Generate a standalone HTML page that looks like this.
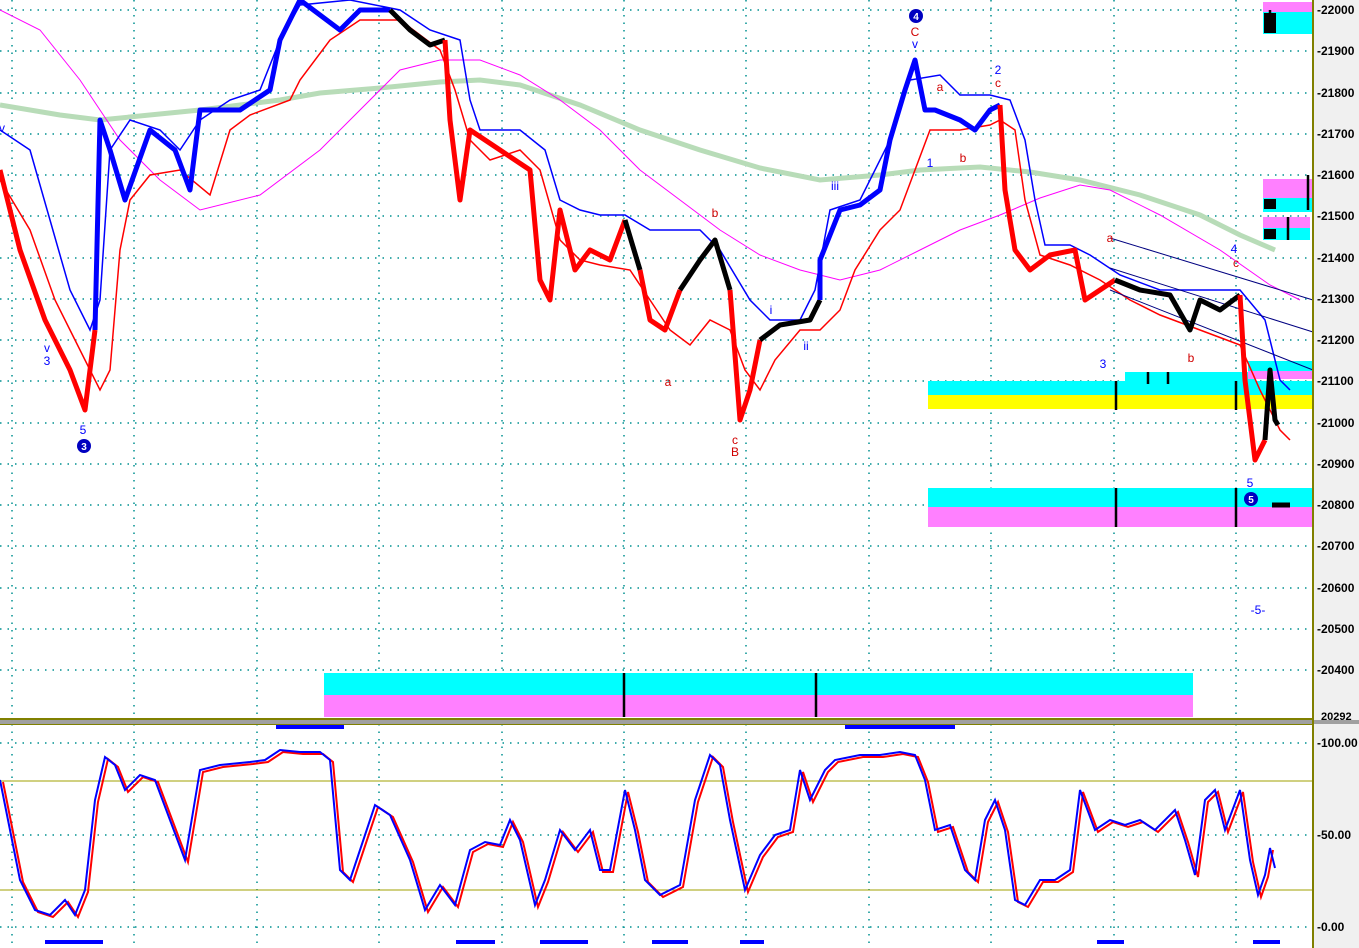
<!DOCTYPE html>
<html><head><meta charset="utf-8"><style>
html,body{margin:0;padding:0;background:#fff;}
svg{display:block;font-family:"Liberation Sans",sans-serif;}
</style></head><body>
<svg width="1359" height="948" viewBox="0 0 1359 948" xmlns="http://www.w3.org/2000/svg">
<rect width="1359" height="948" fill="#fff"/>
<rect x="1314" y="0" width="45" height="948" fill="#f0f0f0"/>
<g stroke="#009090" stroke-width="1.5" stroke-dasharray="1.5,6" fill="none">
<path d="M0 10H1312M0 51H1312M0 93H1312M0 134H1312M0 175H1312M0 216H1312M0 258H1312M0 299H1312M0 340H1312M0 381H1312M0 423H1312M0 464H1312M0 505H1312M0 546H1312M0 588H1312M0 629H1312M0 670H1312"/>
<path d="M12 0V718M134 0V718M257 0V718M379 0V718M502 0V718M624 0V718M746 0V718M869 0V718M991 0V718M1114 0V718M1236 0V718"/>
<path d="M0 743H1312M0 835H1312M0 927H1312"/>
<path d="M12 724V945M134 724V945M257 724V945M379 724V945M502 724V945M624 724V945M746 724V945M869 724V945M991 724V945M1114 724V945M1236 724V945"/>
</g>
<rect x="324" y="673" width="869" height="22" fill="#00ffff"/>
<rect x="324" y="695" width="869" height="22" fill="#ff80ff"/>
<rect x="928" y="381" width="385" height="14" fill="#00ffff"/>
<rect x="928" y="395" width="385" height="14" fill="#ffff00"/>
<rect x="1125" y="372" width="130" height="11" fill="#00ffff"/>
<rect x="1248" y="361" width="65" height="10" fill="#00ffff"/>
<rect x="1248" y="371" width="65" height="8" fill="#ff80ff"/>
<rect x="928" y="488" width="385" height="19" fill="#00ffff"/>
<rect x="928" y="507" width="385" height="20" fill="#ff80ff"/>
<rect x="1263" y="2" width="50" height="10" fill="#ff80ff"/>
<rect x="1263" y="12" width="50" height="22" fill="#00ffff"/>
<rect x="1263" y="179" width="50" height="19" fill="#ff80ff"/>
<rect x="1263" y="198" width="50" height="14" fill="#00ffff"/>
<rect x="1263" y="217" width="47" height="11" fill="#ff80ff"/>
<rect x="1263" y="228" width="47" height="12" fill="#00ffff"/>
<g stroke="#000" stroke-width="2.5">
<path d="M624 673V717M816 673V717M1116 381V410M1236 381V410M1116 488V527M1236 488V527M1148 372V384M1168 372V384M1308 175V210M1288 217V240M1270 10V32"/>
</g>
<rect x="1264" y="13" width="12" height="20" fill="#000"/>
<rect x="1264" y="199" width="12" height="10" fill="#000"/>
<rect x="1264" y="229" width="12" height="10" fill="#000"/>
<polyline fill="none" stroke="#b8dcb8" stroke-width="5" points="0,105 60,115 100,120 200,110 280,100 320,93 380,88 440,82 480,80 520,85 580,105 640,130 700,150 760,168 820,180 880,175 920,170 980,167 1030,172 1080,180 1140,195 1200,215 1240,235 1275,250"/>
<polyline fill="none" stroke="#ff00ff" stroke-width="1" points="0,10 40,30 80,80 120,140 160,180 200,210 260,195 320,150 360,110 400,70 440,60 480,60 520,75 560,100 600,130 640,170 680,200 720,230 760,255 800,270 840,280 880,270 920,250 960,230 1000,215 1040,198 1080,185 1110,190 1160,215 1220,250 1270,285 1300,300"/>
<polyline fill="none" stroke="#0000ff" stroke-width="1.5" points="0,130 30,150 50,220 70,290 90,330 100,300 110,150 130,120 160,130 180,150 200,120 230,100 260,90 280,40 300,5 350,0 400,10 430,30 460,40 470,100 480,130 520,130 545,150 560,200 580,210 600,215 625,215 650,230 700,230 720,250 750,300 770,320 800,320 815,290 830,210 860,200 890,140 910,80 940,75 960,95 990,95 1010,100 1025,140 1035,200 1045,245 1070,245 1090,255 1120,275 1160,290 1200,290 1240,290 1265,320 1280,380 1290,390"/>
<polyline fill="none" stroke="#ff0000" stroke-width="1.5" points="0,180 30,230 55,300 75,340 100,390 110,370 120,250 130,200 150,175 180,170 210,195 230,130 250,115 290,100 300,80 330,40 360,20 400,20 440,50 455,90 470,140 490,160 520,150 540,170 560,240 580,260 600,265 630,270 650,300 670,330 690,345 710,320 730,330 745,370 760,390 775,360 800,330 820,330 840,310 855,270 880,230 900,210 915,170 930,130 960,130 990,125 1000,120 1015,130 1025,200 1040,255 1070,265 1100,280 1130,300 1160,315 1200,330 1240,345 1260,390 1280,430 1290,440"/>
<path d="M1110 238L1313 300M1110 268L1313 332M1110 290L1313 370" stroke="#000080" stroke-width="1" fill="none"/>
<g fill="none" stroke-width="5" stroke-linejoin="round">
<polyline stroke="#ff0000" points="0,170 20,250 45,320 70,370 85,410 95,330"/>
<polyline stroke="#0000ff" points="95,330 100,120 110,150 125,200 150,130 175,150 190,190 200,110 240,110 270,90 280,40 300,0 340,30 360,10 390,10"/>
<polyline stroke="#000" points="390,10 410,30 430,45 445,40"/>
<polyline stroke="#ff0000" points="445,40 450,120 460,200 470,130 500,150 530,170 540,280 550,300 560,210 575,270 590,250 610,260 625,220"/>
<polyline stroke="#000" points="625,220 640,270"/>
<polyline stroke="#ff0000" points="640,270 650,320 665,330 680,290"/>
<polyline stroke="#000" points="680,290 700,260 715,240 730,290"/>
<polyline stroke="#ff0000" points="730,290 740,420 750,390 760,340"/>
<polyline stroke="#000" points="760,340 780,325 810,320 820,300"/>
<polyline stroke="#0000ff" points="820,300 820,260 840,210 860,205 880,190 890,140 905,90 915,60 925,110 935,110 960,120 975,130 990,110 1000,105"/>
<polyline stroke="#ff0000" points="1000,105 1005,190 1015,250 1030,270 1050,255 1075,250 1085,300 1100,290 1115,280"/>
<polyline stroke="#000" points="1115,280 1140,290 1170,295 1190,330 1200,300 1220,310 1240,295"/>
<polyline stroke="#ff0000" points="1240,295 1245,380 1255,460 1265,440"/>
<polyline stroke="#000" points="1265,440 1270,370 1275,420 1278,425"/>
</g>
<path d="M1272 505h18" stroke="#000" stroke-width="5"/>
<g font-size="12" text-anchor="middle">
<g fill="#0000ff"><text x="47" y="352">v</text><text x="47" y="365">3</text><text x="83" y="434">5</text><text x="2" y="132">v</text><text x="930" y="167">1</text><text x="998" y="74">2</text><text x="1103" y="368">3</text><text x="1234" y="253">4</text><text x="1250" y="487">5</text><text x="835" y="190">iii</text><text x="771" y="314">i</text><text x="806" y="350">ii</text><text x="915" y="48">v</text><text x="1258" y="614">-5-</text></g>
<g fill="#d00000"><text x="915" y="36">C</text><text x="940" y="91">a</text><text x="963" y="162">b</text><text x="998" y="87">c</text><text x="1110" y="242">a</text><text x="1191" y="362">b</text><text x="1236" y="267">c</text><text x="715" y="217">b</text><text x="668" y="386">a</text><text x="735" y="444">c</text><text x="735" y="456">B</text></g>
</g>
<g font-size="10" font-weight="bold" text-anchor="middle" fill="#fff">
<circle cx="84" cy="446" r="7" fill="#0000c0"/><text x="84" y="450">3</text>
<circle cx="916" cy="16" r="7" fill="#0000c0"/><text x="916" y="20">4</text>
<circle cx="1251" cy="499" r="7" fill="#0000c0"/><text x="1251" y="503">5</text>
</g>
<rect x="0" y="718" width="1314" height="2" fill="#808000"/>
<rect x="0" y="720" width="1359" height="4" fill="#a0a0a0"/>
<rect x="0" y="724" width="1314" height="1" fill="#808000"/>
<rect x="1312" y="0" width="2" height="948" fill="#808000"/>
<path d="M0 781H1312M0 890H1312" stroke="#a0a000" stroke-width="1"/>
<path d="M276 727h68M845 727h110M45 942h58M456 942h39M540 942h48M652 942h36M740 942h24M1097 942h27M1253 942h27" stroke="#0000ff" stroke-width="4"/>
<polyline fill="none" stroke="#ff0000" stroke-width="2" transform="translate(3,2)" points="0,780 10,830 20,880 35,910 50,915 65,900 75,915 85,890 95,800 105,757 115,765 125,790 140,775 155,780 170,820 185,860 200,770 220,765 250,762 265,760 280,750 300,752 320,752 330,760 340,870 350,880 360,850 375,805 390,815 410,860 425,910 440,885 455,905 470,850 485,842 500,845 510,820 520,840 535,905 545,880 560,830 575,850 590,830 600,870 610,870 625,790 635,830 645,880 660,895 680,885 695,800 710,755 720,765 730,820 745,890 760,855 775,835 790,830 800,770 810,800 825,770 835,760 860,755 880,755 900,752 915,755 925,780 935,830 950,825 965,870 975,880 985,820 995,800 1005,830 1015,900 1025,905 1040,880 1055,880 1070,870 1080,790 1095,830 1110,820 1125,825 1140,820 1155,830 1175,810 1185,840 1195,875 1205,800 1215,790 1225,830 1240,790 1250,860 1258,895 1265,875 1270,848"/>
<polyline fill="none" stroke="#0000ff" stroke-width="2" points="0,780 10,830 20,880 35,910 50,915 65,900 75,915 85,890 95,800 105,757 115,765 125,790 140,775 155,780 170,820 185,860 200,770 220,765 250,762 265,760 280,750 300,752 320,752 330,760 340,870 350,880 360,850 375,805 390,815 410,860 425,910 440,885 455,905 470,850 485,842 500,845 510,820 520,840 535,905 545,880 560,830 575,850 590,830 600,870 610,870 625,790 635,830 645,880 660,895 680,885 695,800 710,755 720,765 730,820 745,890 760,855 775,835 790,830 800,770 810,800 825,770 835,760 860,755 880,755 900,752 915,755 925,780 935,830 950,825 965,870 975,880 985,820 995,800 1005,830 1015,900 1025,905 1040,880 1055,880 1070,870 1080,790 1095,830 1110,820 1125,825 1140,820 1155,830 1175,810 1185,840 1195,875 1205,800 1215,790 1225,830 1240,790 1250,860 1258,895 1265,875 1270,848 1275,868"/>
<g font-size="12" font-weight="bold" fill="#000">
<text x="1317" y="14">-22000</text><text x="1317" y="55">-21900</text><text x="1317" y="97">-21800</text><text x="1317" y="138">-21700</text><text x="1317" y="179">-21600</text><text x="1317" y="220">-21500</text><text x="1317" y="262">-21400</text><text x="1317" y="303">-21300</text><text x="1317" y="344">-21200</text><text x="1317" y="385">-21100</text><text x="1317" y="427">-21000</text><text x="1317" y="468">-20900</text><text x="1317" y="509">-20800</text><text x="1317" y="550">-20700</text><text x="1317" y="592">-20600</text><text x="1317" y="633">-20500</text><text x="1317" y="674">-20400</text>
<text x="1321" y="720" font-size="11">20292</text>
<text x="1317" y="747">-100.00</text><text x="1317" y="839">-50.00</text><text x="1317" y="931">-0.00</text>
</g>
</svg>
</body></html>
